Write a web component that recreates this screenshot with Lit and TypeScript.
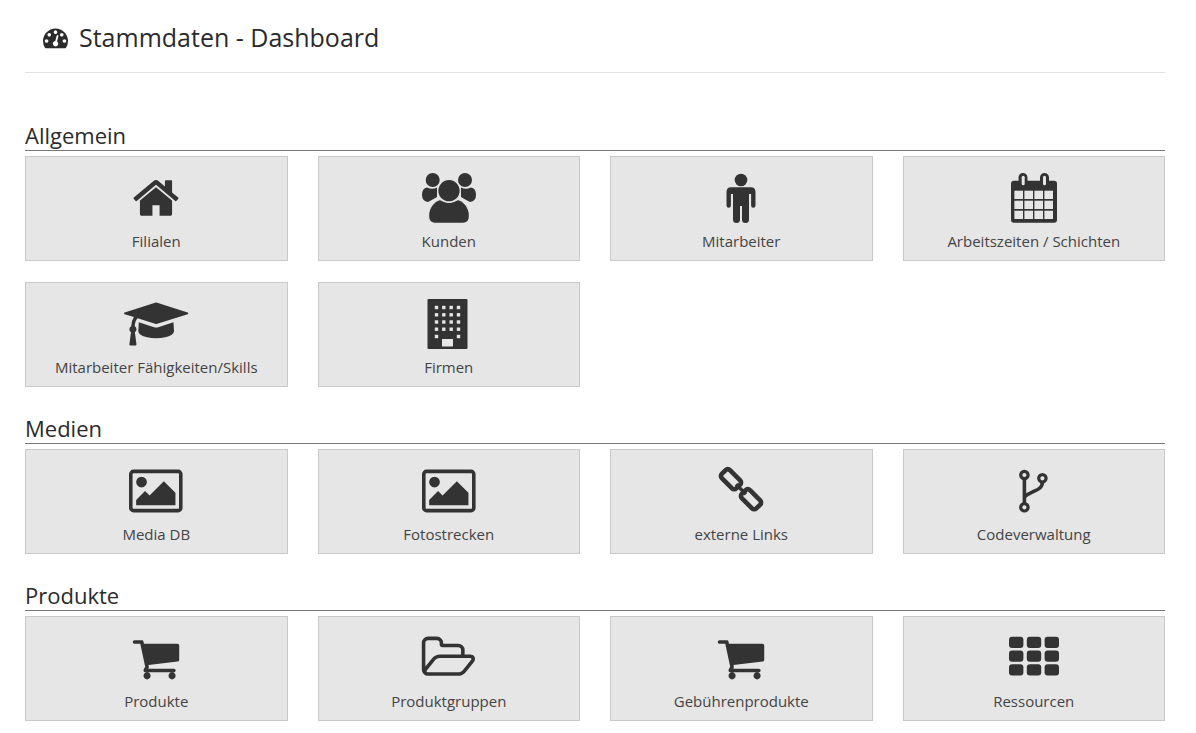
import { LitElement, html, css, svg, TemplateResult, unsafeCSS } from "lit";
import { customElement } from "lit/decorators.js";

const BG = "#e6e6e6";

const fa = (w: number, vb: string, d: string) => html`<svg class="ic" style="width:${w}px" viewBox=${vb}><path d=${d}></path></svg>`;
const px = (content: TemplateResult) => html`<svg class="ic" style="width:50px" viewBox="-25 0 50 50">${content}</svg>`;

const home = fa(50, "0 0 1792 1792", "M1472 992v480q0 26-19 45t-45 19h-384v-384h-256v384h-384q-26 0-45-19t-19-45v-480q0-1 .5-3t.5-3l575-474 575 474q1 2 1 6zm223-69l-62 74q-8 9-21 11h-3q-13 0-21-7l-692-577-692 577q-12 8-24 7-13-2-21-11l-62-74q-8-10-7-23.5t11-21.5l719-599q32-26 76-26t76 26l244 204v-195q0-14 9-23t23-9h192q14 0 23 9t9 23v408l219 182q10 8 11 21.5t-7 23.5z");
const picture = fa(53.6, "-64 0 1920 1792", "M576 576q0 80-56 136t-136 56-136-56-56-136 56-136 136-56 136 56 56 136zm1024 384v448h-1408v-192l320-320 160 160 512-512zm96-704h-1600q-13 0-22.5 9.5t-9.5 22.5v1216q0 13 9.500 22.500t22.500 9.500h1600q13 0 22.500-9.500t9.500-22.500v-1216q0-13-9.500-22.500t-22.500-9.500zm160 32v1216q0 66-47 113t-113 47h-1600q-66 0-113-47t-47-113v-1216q0-66 47-113t113-47h1600q66 0 113 47t47 113z");
const cart = fa(50, "0 0 1792 1792", "M704 1536q0 52-38 90t-90 38-90-38-38-90 38-90 90-38 90 38 38 90zm896 0q0 52-38 90t-90 38-90-38-38-90 38-90 90-38 90 38 38 90zm128-1088v512q0 24-16.5 42.500t-40.500 21.500l-1044 122q13 60 13 70 0 16-24 64h920q26 0 45 19t19 45-19 45-45 19h-1024q-26 0-45-19t-19-45q0-11 8-31.500t16-36 21.500-40 15.500-29.500l-177-823h-204q-26 0-45-19t-19-45 19-45 45-19h256q16 0 28.500 6.500t19.500 15.500 13 24.500 8 26 5.500 29.500 4.500 26h1201q26 0 45 19t19 45z");
const cap = fa(64.3, "0 0 2304 1792", "M1774 836l18 316q4 69-82 128t-235 93.500-323 34.500-323-34.500-235-93.500-82-128l18-316 574 181q22 7 48 7t48-7zm530-324q0 23-22 31l-1120 352q-4 1-10 1t-10-1l-652-206q-43 34-71 111.500t-34 178.500q63 36 63 109 0 69-58 107l58 433q2 14-8 25-9 11-24 11h-192q-15 0-24-11-10-11-8-25l58-433q-58-38-58-107 0-73 65-111 11-207 98-330l-333-104q-22-8-22-31t22-31l1120-352q4-1 10-1t10 1l1120 352q22 8 22 31z");
const folder = fa(57.1, "0 0 2048 1792", "M1845 931q0-35-53-35h-1088q-40 0-85.500 21.500t-71.500 52.500l-294 363q-18 24-18 40 0 35 53 35h1088q40 0 86-22t71-53l294-363q18-22 18-39zm-1141-163h768v-160q0-40-28-68t-68-28h-576q-40 0-68-28t-28-68v-64q0-40-28-68t-68-28h-320q-40 0-68 28t-28 68v853l256-315q44-53 116-87.500t140-34.500zm1269 163q0 62-46 120l-295 363q-43 53-116 87.500t-140 34.500h-1088q-92 0-158-66t-66-158v-960q0-92 66-158t158-66h320q92 0 158 66t66 158v32h544q92 0 158 66t66 158v160h192q54 0 99 24.500t67 70.500q15 32 15 68z");

const users = px(svg`
  <path d="M-27 22Q-27 15 -22 14.500Q-17 17 -12 14.500L-12 24Q-17 27 -21 29Q-27 28 -27 22Z"></path>
  <path d="M27 22Q27 15 22 14.500Q17 17 12 14.500L12 24Q17 27 21 29Q27 28 27 22Z"></path>
  <circle cx="-16.300" cy="7" r="7"></circle>
  <circle cx="16" cy="7" r="7"></circle>
  <path stroke=${BG} stroke-width="1.300" d="M-14 50.300Q-20.500 50.300 -20.500 43C-20.500 33 -14 28 -9 26.500Q0 32 9 26.500C14 28 20.500 33 20.500 43Q20.500 50.300 14 50.300Z"></path>
  <circle stroke=${BG} stroke-width="1.300" cx="0" cy="17.700" r="11.300"></circle>
`);

const male = px(svg`
  <circle cx="0" cy="7" r="6.300"></circle>
  <path d="M-10 14.300H10Q14.500 14.300 14.500 19V32.500a2.200 2.200 0 0 1-4.400 0V21H8V46.500a3.500 3.500 0 0 1-7 0V33H-1V46.500a3.500 3.500 0 0 1-7 0V21H-10.100V32.500a2.200 2.200 0 0 1-4.400 0V19Q-14.500 14.300 -10 14.300Z"></path>
`);

const calCells: TemplateResult[] = [];
for (let r = 0; r < 3; r++) {
  for (let c = 0; c < 4; c++) {
    calCells.push(svg`<rect x=${-19.600 + c * 10} y=${17.700 + r * 10} width="8.600" height="8.300" fill=${BG}></rect>`);
  }
}
const calendar = px(svg`
  <path d="M-20 7.700H-15.500V4.500a4.500 4.500 0 0 1 9 0V7.700H6V4.500a4.500 4.500 0 0 1 9 0V7.700H20Q23 7.700 23 10.700V46.700Q23 49.700 20 49.700H-20Q-23 49.700 -23 46.700V10.700Q-23 7.700 -20 7.700Z"></path>
  <rect x="-12.300" y="2.800" width="3" height="9.500" rx="1.500" fill=${BG}></rect>
  <rect x="9" y="2.800" width="3" height="9.500" rx="1.500" fill=${BG}></rect>
  ${calCells}
`);

const winXs = [-12.500, -5.200, 2.200, 9.500];
const windows: TemplateResult[] = [];
for (const y of [8.500, 15.800, 23, 30.200]) {
  for (const x of winXs) {
    windows.push(svg`<rect x=${x - 1.700} y=${y - 1.700} width="3.400" height="3.400" fill=${BG}></rect>`);
  }
}
const building = px(svg`
  <rect x="-21.500" y="0" width="40" height="50" rx="1"></rect>
  ${windows}
  <rect x="-14.200" y="35.800" width="3.400" height="3.400" fill=${BG}></rect>
  <rect x="7.800" y="35.800" width="3.400" height="3.400" fill=${BG}></rect>
  <rect x="-7" y="40" width="11" height="7.500" fill=${BG}></rect>
`);

const link = px(svg`
  <g fill="none" stroke="#333" stroke-width="4.600">
    <rect x="-10.250" y="-5.750" width="20.500" height="11.500" rx="3" transform="translate(-10 13.200) rotate(45)"></rect>
    <rect x="-10.250" y="-5.750" width="20.500" height="11.500" rx="3" transform="translate(10 33.200) rotate(45)"></rect>
    <path stroke-width="3.400" d="M-5 18.200L5 28.200"></path>
  </g>
`);

const fork = px(svg`
  <g fill="none" stroke="#333" stroke-width="3.200">
    <circle cx="-9.600" cy="9" r="3.700"></circle>
    <circle cx="8.400" cy="12.300" r="3.700"></circle>
    <circle cx="-9.600" cy="41.300" r="3.700"></circle>
    <path stroke-width="3.600" d="M-9.600 13V37.500"></path>
    <path stroke-width="3.600" d="M8.400 16C8.400 25 -2 24 -9.600 31"></path>
  </g>
`);

const thCells: TemplateResult[] = [];
for (const y of [3.700, 17.500, 31.300]) {
  for (const x of [-25, -7.200, 10.600]) {
    thCells.push(svg`<rect x=${x} y=${y} width="14.400" height="11.200" rx="3"></rect>`);
  }
}
const th = px(svg`${thCells}`);

const gaugePath = "M384 1152q0-53-37.500-90.500t-90.500-37.500-90.500 37.500-37.500 90.500 37.500 90.500 90.500 37.500 90.500-37.500 37.500-90.500zm192-448q0-53-37.500-90.500t-90.500-37.500-90.500 37.500-37.500 90.500 37.500 90.500 90.500 37.500 90.500-37.500 37.500-90.500zm428 481l101-382q6-26-7.500-48.500t-38.500-29.500-48 6.500-30 39.500l-101 382q-60 5-107 43.500t-63 98.500q-20 77 20 146t117 89 146-20 89-117q16-60-6-117t-72-91zm660-33q0-53-37.500-90.500t-90.500-37.500-90.500 37.500-37.500 90.500 37.500 90.500 90.500 37.500 90.500-37.500 37.500-90.500zm-640-640q0-53-37.500-90.500t-90.500-37.500-90.500 37.500-37.500 90.500 37.500 90.500 90.500 37.500 90.500-37.500 37.500-90.500zm448 192q0-53-37.500-90.500t-90.500-37.500-90.500 37.500-37.500 90.500 37.500 90.500 90.500 37.500 90.500-37.500 37.500-90.500zm320 448q0 261-141 483-19 29-54 29h-1402q-35 0-54-29-141-221-141-483 0-182 71-348t191-286 286-191 348-71 348 71 286 191 191 286 71 348z";

interface Tile { label: string; icon: TemplateResult; }
interface Section { title: string; tiles: Tile[]; }

const sections: Section[] = [
  {
    title: "Allgemein",
    tiles: [
      { label: "Filialen", icon: home },
      { label: "Kunden", icon: users },
      { label: "Mitarbeiter", icon: male },
      { label: "Arbeitszeiten / Schichten", icon: calendar },
      { label: "Mitarbeiter Fähigkeiten/Skills", icon: cap },
      { label: "Firmen", icon: building },
    ],
  },
  {
    title: "Medien",
    tiles: [
      { label: "Media DB", icon: picture },
      { label: "Fotostrecken", icon: picture },
      { label: "externe Links", icon: link },
      { label: "Codeverwaltung", icon: fork },
    ],
  },
  {
    title: "Produkte",
    tiles: [
      { label: "Produkte", icon: cart },
      { label: "Produktgruppen", icon: folder },
      { label: "Gebührenprodukte", icon: cart },
      { label: "Ressourcen", icon: th },
    ],
  },
];

@customElement("app-root")
export class AppRoot extends LitElement {
  static styles = css`
    :host {
      display: block;
      box-sizing: border-box;
      width: 1196px;
      height: 733px;
      padding: 0 31px 0 25px;
      background: #fff;
      color: #2b2b2b;
      font-family: "Open Sans", sans-serif;
      overflow: hidden;
    }
    .page-head {
      display: flex;
      align-items: center;
      gap: 11px;
      box-sizing: border-box;
      height: 73px;
      padding: 3px 0 0 18px;
      border-bottom: 1px solid #e3e3e3;
      margin-bottom: 49px;
    }
    .gauge {
      width: 25px;
      height: 25px;
      fill: #2b2b2b;
      flex: none;
    }
    h1 {
      margin: 0 0 2px;
      font-size: 25px;
      line-height: 32px;
      font-weight: 400;
    }
    .sections {
      display: flex;
      flex-direction: column;
      gap: 28px;
    }
    h2 {
      margin: 0 0 5px;
      height: 29px;
      box-sizing: border-box;
      font-size: 22px;
      line-height: 26px;
      font-weight: 400;
      border-bottom: 1px solid #777;
    }
    .grid {
      display: grid;
      grid-template-columns: repeat(4, 1fr);
      column-gap: 30px;
      row-gap: 21px;
    }
    .tile {
      display: flex;
      flex-direction: column;
      align-items: center;
      box-sizing: border-box;
      height: 105px;
      padding-top: 16px;
      background: ${unsafeCSS(BG)};
      border: 1px solid #c9c9c9;
    }
    .icon {
      display: flex;
      justify-content: center;
      height: 50px;
      margin-bottom: 8px;
    }
    .ic {
      height: 50px;
      fill: #333;
      overflow: visible;
      flex: none;
    }
    .label {
      font-size: 15px;
      line-height: 20px;
      color: #444;
      white-space: nowrap;
    }
  `;

  render() {
    return html`
      <header class="page-head">
        <svg class="gauge" viewBox="0 0 1792 1792"><path d=${gaugePath}></path></svg>
        <h1>Stammdaten - Dashboard</h1>
      </header>
      <div class="sections">
        ${sections.map(
          (s) => html`
            <section>
              <h2>${s.title}</h2>
              <div class="grid">
                ${s.tiles.map(
                  (t) => html`
                    <div class="tile">
                      <div class="icon">${t.icon}</div>
                      <div class="label">${t.label}</div>
                    </div>
                  `
                )}
              </div>
            </section>
          `
        )}
      </div>
    `;
  }
}
